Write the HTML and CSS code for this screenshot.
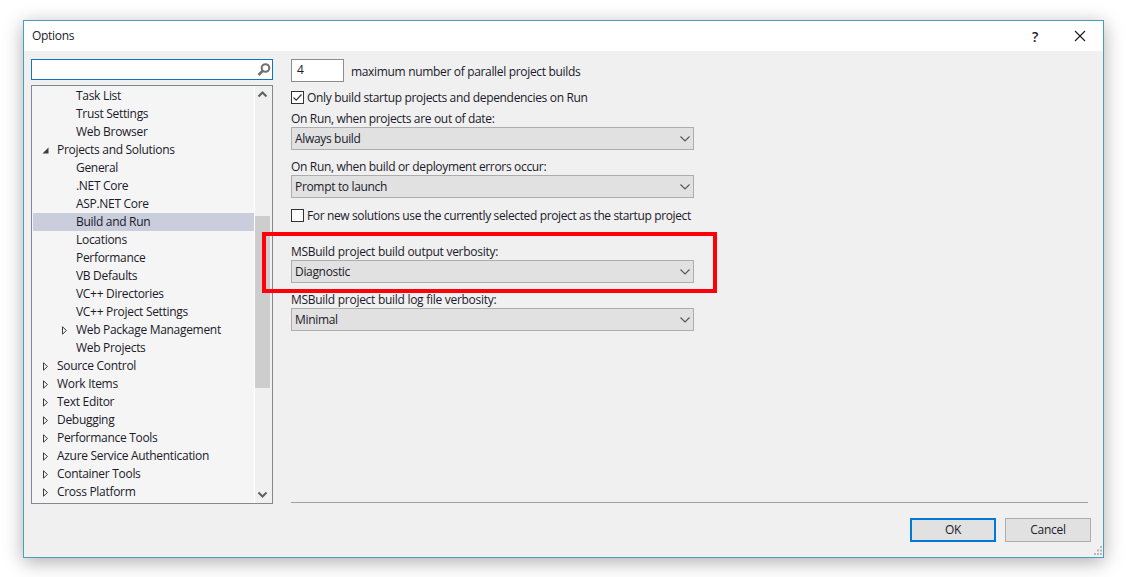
FILE: index.html
```html
<!DOCTYPE html>
<html lang="en">
<head>
<meta charset="utf-8">
<title>Options</title>
<link rel="stylesheet" href="styles.css">
</head>
<body>
<div class="dialog">
  <header class="titlebar">
    <span class="title">Options</span>
    <span class="help">?</span>
    <svg class="close" width="12" height="12" viewBox="0 0 12 12"><path d="M1 1L11 11M11 1L1 11" stroke="#1a1a1a" stroke-width="1.1" fill="none"/></svg>
  </header>
  <div class="content">
    <div class="main">
      <aside class="nav">
        <div class="search">
          <svg class="search-icon" width="16" height="16" viewBox="0 0 16 16"><circle cx="9.5" cy="6" r="3.8" fill="none" stroke="#717171" stroke-width="2"/><path d="M6.8 8.800L2.500 13" stroke="#717171" stroke-width="2.6" fill="none"/></svg>
        </div>
        <div class="tree">
          <ul class="rows">
            <li class="row l2">Task List</li>
            <li class="row l2">Trust Settings</li>
            <li class="row l2">Web Browser</li>
            <li class="row l1"><svg class="tw" width="7" height="9" viewBox="0 0 7 9"><path d="M6.5 1.500V7.500H0.500Z" fill="#3c3c3c"/></svg>Projects and Solutions</li>
            <li class="row l2">General</li>
            <li class="row l2">.NET Core</li>
            <li class="row l2">ASP.NET Core</li>
            <li class="row l2 selected">Build and Run</li>
            <li class="row l2">Locations</li>
            <li class="row l2">Performance</li>
            <li class="row l2">VB Defaults</li>
            <li class="row l2">VC++ Directories</li>
            <li class="row l2">VC++ Project Settings</li>
            <li class="row l2b"><svg class="tw" width="6" height="9" viewBox="0 0 6 9"><path d="M1 .8V8.200L5 4.500Z" fill="none" stroke="#3c3c3c"/></svg>Web Package Management</li>
            <li class="row l2">Web Projects</li>
            <li class="row l1"><svg class="tw" width="6" height="9" viewBox="0 0 6 9"><path d="M1 .8V8.200L5 4.500Z" fill="none" stroke="#3c3c3c"/></svg>Source Control</li>
            <li class="row l1"><svg class="tw" width="6" height="9" viewBox="0 0 6 9"><path d="M1 .8V8.200L5 4.500Z" fill="none" stroke="#3c3c3c"/></svg>Work Items</li>
            <li class="row l1"><svg class="tw" width="6" height="9" viewBox="0 0 6 9"><path d="M1 .8V8.200L5 4.500Z" fill="none" stroke="#3c3c3c"/></svg>Text Editor</li>
            <li class="row l1"><svg class="tw" width="6" height="9" viewBox="0 0 6 9"><path d="M1 .8V8.200L5 4.500Z" fill="none" stroke="#3c3c3c"/></svg>Debugging</li>
            <li class="row l1"><svg class="tw" width="6" height="9" viewBox="0 0 6 9"><path d="M1 .8V8.200L5 4.500Z" fill="none" stroke="#3c3c3c"/></svg>Performance Tools</li>
            <li class="row l1"><svg class="tw" width="6" height="9" viewBox="0 0 6 9"><path d="M1 .8V8.200L5 4.500Z" fill="none" stroke="#3c3c3c"/></svg>Azure Service Authentication</li>
            <li class="row l1"><svg class="tw" width="6" height="9" viewBox="0 0 6 9"><path d="M1 .8V8.200L5 4.500Z" fill="none" stroke="#3c3c3c"/></svg>Container Tools</li>
            <li class="row l1"><svg class="tw" width="6" height="9" viewBox="0 0 6 9"><path d="M1 .8V8.200L5 4.500Z" fill="none" stroke="#3c3c3c"/></svg>Cross Platform</li>
          </ul>
          <div class="scrollbar">
            <svg class="sb-arrow" width="17" height="17" viewBox="0 0 17 17"><path d="M4.500 10.500L8.500 6.500L12.500 10.500" fill="none" stroke="#606060" stroke-width="2"/></svg>
            <div class="track"><div class="thumb"></div></div>
            <svg class="sb-arrow" width="17" height="17" viewBox="0 0 17 17"><path d="M4.500 6.500L8.500 10.500L12.500 6.500" fill="none" stroke="#606060" stroke-width="2"/></svg>
          </div>
        </div>
      </aside>
      <section class="panel">
        <div class="spin-row">
          <div class="spin">4</div>
          <span class="spin-label">maximum number of parallel project builds</span>
        </div>
        <div class="check-row first-check">
          <svg class="check" width="13" height="13" viewBox="0 0 13 13"><rect x=".5" y=".5" width="12" height="12" fill="#fff" stroke="#333"/><path d="M2.500 6.500L5.200 9.200L10.500 3.500" fill="none" stroke="#333" stroke-width="1.2"/></svg>
          <span>Only build startup projects and dependencies on Run</span>
        </div>
        <div class="label l-a">On Run, when projects are out of date:</div>
        <div class="select"><span>Always build</span><svg width="10" height="6" viewBox="0 0 10 6"><path d="M.5 .5L5 5L9.500 .5" fill="none" stroke="#555" stroke-width="1.1"/></svg></div>
        <div class="label l-b">On Run, when build or deployment errors occur:</div>
        <div class="select"><span>Prompt to launch</span><svg width="10" height="6" viewBox="0 0 10 6"><path d="M.5 .5L5 5L9.500 .5" fill="none" stroke="#555" stroke-width="1.1"/></svg></div>
        <div class="check-row second-check">
          <svg class="check" width="13" height="13" viewBox="0 0 13 13"><rect x=".5" y=".5" width="12" height="12" fill="#fff" stroke="#333"/></svg>
          <span>For new solutions use the currently selected project as the startup project</span>
        </div>
        <div class="label l-c">MSBuild project build output verbosity:</div>
        <div class="select"><span>Diagnostic</span><svg width="10" height="6" viewBox="0 0 10 6"><path d="M.5 .5L5 5L9.500 .5" fill="none" stroke="#555" stroke-width="1.1"/></svg></div>
        <div class="label l-d">MSBuild project build log file verbosity:</div>
        <div class="select"><span>Minimal</span><svg width="10" height="6" viewBox="0 0 10 6"><path d="M.5 .5L5 5L9.500 .5" fill="none" stroke="#555" stroke-width="1.1"/></svg></div>
        <div class="highlight"></div>
      </section>
    </div>
    <div class="separator"></div>
    <footer class="footer">
      <button class="btn default">OK</button>
      <button class="btn">Cancel</button>
    </footer>
    <svg class="grip" width="12" height="12" viewBox="0 0 12 12"><path d="M9 1h2v2H9zM6 4.500h2v2H6zM9 4.500h2v2H9zM3 8h2v2H3zM6 8h2v2H6zM9 8h2v2H9z" fill="#b8b8b8"/></svg>
  </div>
</div>
</body>
</html>
```

FILE: styles.css
```css
* { box-sizing: border-box; }
html, body { margin: 0; height: 100%; }
body {
  background: #fff;
  padding: 20px 22px 0 23px;
  font-family: "Open Sans", "Noto Sans", sans-serif;
  font-size: 12px;
  letter-spacing: -0.3px;
  color: #1a1a2a;
  overflow: hidden;
}
.dialog {
  width: 1081px;
  height: 538px;
  border: 1px solid #4b9dbd;
  background: #f0f0f0;
  box-shadow: 0 4px 18px rgba(0,0,0,.32);
  display: flex;
  flex-direction: column;
}
.titlebar {
  height: 30px;
  flex: none;
  background: #fff;
  display: flex;
  align-items: center;
  padding: 0 17px 0 8px;
}
.title { flex: 1; line-height: 30px; }
.help { width: 12px; margin-right: 33px; font-size: 14px; font-weight: 600; text-align: center; }
.close { display: block; }
.content {
  flex: 1;
  display: flex;
  flex-direction: column;
  position: relative;
  min-height: 0;
}
.main {
  flex: 1;
  display: flex;
  gap: 18px;
  padding: 8px 0 0 7px;
  min-height: 0;
}
.nav { width: 242px; flex: none; display: flex; flex-direction: column; gap: 5px; }
.search {
  height: 21px;
  flex: none;
  background: #fff;
  border: 1px solid #0f74c4;
  display: flex;
  align-items: center;
  justify-content: flex-end;
}
.search-icon { display: block; }
.tree {
  height: 419px;
  border: 1px solid #828790;
  background: #f5f5f5;
  display: flex;
  flex: none;
}
.rows {
  flex: 1;
  list-style: none;
  margin: 0;
  padding: 1px 0 0 1px;
  overflow: hidden;
  min-width: 0;
}
.row {
  height: 18px;
  line-height: 18px;
  display: flex;
  align-items: center;
  white-space: nowrap;
}
.l1 { padding-left: 9px; }
.l2 { padding-left: 43px; }
.l2b { padding-left: 28px; }
.tw { flex: none; margin-right: 9px; }
.l1 .tw { width: 7px; margin-right: 8px; }
.l2b .tw { width: 7px; margin-right: 8px; }
.selected { background: #c9cddc; }
.scrollbar {
  width: 18px;
  flex: none;
  border-left: 1px solid #fff;
  background: #f0f0f0;
  display: flex;
  flex-direction: column;
  padding-right: 1px;
}
.sb-arrow { display: block; flex: none; width: 17px; height: 17px; margin-left: -1px; }
.track { flex: 1; padding-top: 113px; }
.thumb { width: 15px; height: 172px; background: #cdcdcd; }
.panel { flex: 1; position: relative; letter-spacing: -0.33px; }
.spin-row { display: flex; align-items: center; gap: 7px; height: 23px; }
.spin-label { padding-top: 1px; }
.spin {
  width: 53px;
  height: 23px;
  background: #fff;
  border: 1px solid #8d8d8d;
  padding-left: 5px;
  line-height: 19px;
}
.check-row { display: flex; align-items: center; gap: 3px; height: 15px; white-space: nowrap; }
.check { flex: none; display: block; }
.first-check { margin-top: 8px; }
.second-check { margin-top: 10px; letter-spacing: -0.37px; }
.label { height: 16px; line-height: 16px; white-space: nowrap; }
.l-a { margin-top: 6px; }
.l-b { margin-top: 9px; }
.l-c { margin-top: 21px; letter-spacing: -0.28px; }
.l-d { margin-top: 9px; letter-spacing: -0.28px; }
.select {
  width: 403px;
  height: 23px;
  background: #e1e1e1;
  border: 1px solid #adadad;
  display: flex;
  align-items: center;
  justify-content: space-between;
  padding: 0 3px;
}
.select svg { display: block; }
.select span { line-height: 21px; }
.highlight {
  position: absolute;
  left: -29px;
  top: 173px;
  width: 455px;
  height: 61px;
  border: 4px solid #ff0008;
  pointer-events: none;
}
.separator {
  height: 1px;
  flex: none;
  background: #a0a0a0;
  margin: 0 15px 0 267px;
}
.footer {
  flex: none;
  height: 54px;
  display: flex;
  justify-content: flex-end;
  gap: 9px;
  padding: 15px 12px 0 0;
}
.btn {
  width: 86px;
  height: 24px;
  background: #e1e1e1;
  border: 1px solid #adadad;
  font: inherit;
  letter-spacing: inherit;
  color: inherit;
  padding: 0 0 1px;
}
.default { border: 2px solid #0078d7; }
.grip { position: absolute; right: 0; bottom: 0; }
```
